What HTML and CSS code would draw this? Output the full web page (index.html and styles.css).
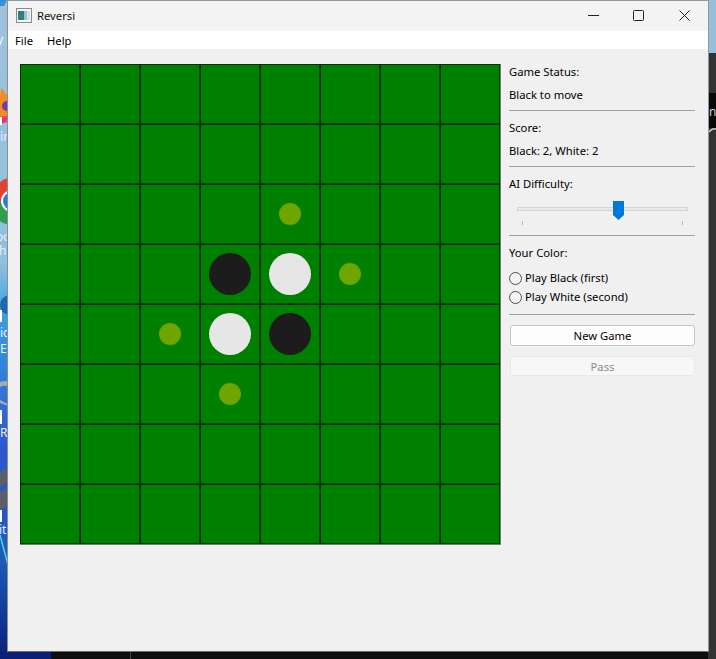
FILE: index.html
```html
<!DOCTYPE html>
<html lang="en">
<head>
<meta charset="utf-8">
<title>Reversi</title>
<link rel="stylesheet" href="styles.css">
</head>
<body>
<div class="desktop">
  <svg class="wallpaper" width="716" height="659" viewBox="0 0 716 659">
    <defs>
      <linearGradient id="wall" x1="0" y1="0" x2="0" y2="1">
        <stop offset="0" stop-color="#9fc2da"/>
        <stop offset="0.4" stop-color="#8fc0dc"/>
        <stop offset="0.48" stop-color="#35a0e0"/>
        <stop offset="0.68" stop-color="#2f55d0"/>
        <stop offset="0.85" stop-color="#1c5cb8"/>
        <stop offset="1" stop-color="#0a1f78"/>
      </linearGradient>
    </defs>
    <rect x="0" y="0" width="716" height="659" fill="#0e0e0e"/>
    <rect x="0" y="0" width="8" height="659" fill="url(#wall)"/>
    <rect x="0" y="651" width="51" height="8" fill="#0a1f78"/>
    <rect x="130" y="651" width="1" height="8" fill="#444"/>
    <rect x="708" y="0" width="8" height="53" fill="#97bfda"/>
    <rect x="708" y="53" width="8" height="606" fill="#333"/>
    <rect x="708" y="93" width="8" height="35" fill="#0a0a0a"/>
    <text x="709" y="116" class="desk-text" fill="#ccc">n</text>
    <path d="M709 132q3-4 7-3" fill="none" stroke="#ccc" stroke-width="1.5"/>
    <path d="M0 6h4l3-6H0z" fill="#3a8fd0"/>
    <text x="-3" y="44" class="desk-text" fill="#fff">y</text>
    <path d="M1 88q7 6 7 14v14q-2 6-8 7v-25z" fill="#f58a20"/>
    <circle cx="7" cy="106" r="5" fill="#6a3bb5"/>
    <path d="M0 116q5 2 8-1v6q-4 3-8 3z" fill="#e8366f"/>
    <rect x="0" y="117" width="2" height="8" fill="#fff"/>
    <text x="-6" y="141" class="desk-text" fill="#eef">Fir</text>
    <path d="M0 182a23 23 0 0 1 8-4v23H0z" fill="#e2412f"/>
    <path d="M0 201h8v23q-5 0-8-3z" fill="#2e9e4c"/>
    <circle cx="12" cy="201" r="11" fill="#fff"/>
    <circle cx="12" cy="201" r="9" fill="#2b78e4"/>
    <text x="-4" y="241" class="desk-text" fill="#eef">oo</text>
    <text x="-1" y="255" class="desk-text" fill="#eef">h</text>
    <circle cx="10" cy="305" r="10" fill="#1f66b0"/>
    <rect x="0" y="310" width="2" height="12" fill="#fff"/>
    <text x="0" y="337" class="desk-text" fill="#eef">ic</text>
    <text x="0" y="353" class="desk-text" fill="#eef">E</text>
    <path d="M0 382q8-2 8 0v4q-5-1-8 1zM0 400l8 4v2l-8-3z" fill="#a8a8b0"/>
    <rect x="0" y="410" width="2" height="14" fill="#fff"/>
    <text x="0" y="437" class="desk-text" fill="#eef">R</text>
    <path d="M0 472l8-4v14l-8 5zM0 492l8-4v18l-8 4z" fill="#5a5e66"/>
    <rect x="0" y="510" width="2" height="12" fill="#fff"/>
    <text x="-1" y="534" class="desk-text" fill="#eef">it</text>
    <path d="M0 535l8 30" stroke="#4fd0e8" stroke-width="1.5" fill="none"/>
  </svg>
</div>

<main class="window">
  <header class="titlebar">
    <svg class="app-icon" width="16" height="15" viewBox="0 0 16 15">
      <rect x="0.5" y="0.5" width="15" height="14" fill="#f4f4f4" stroke="#8a8a8a"/>
      <rect x="2" y="3" width="6" height="9" fill="#2f7f80"/>
      <rect x="8" y="3" width="3" height="9" fill="#9cc4c8"/>
      <rect x="11" y="3" width="3" height="9" fill="#d8e4e4"/>
    </svg>
    <span class="title">Reversi</span>
    <div class="controls">
      <span class="control control-min">
        <svg width="11" height="11" viewBox="0 0 11 11"><path d="M0 5.500h11" stroke="#222" stroke-width="1"/></svg>
      </span>
      <span class="control">
        <svg width="11" height="11" viewBox="0 0 11 11"><rect x="0.500" y="0.500" width="10" height="10" rx="1" fill="none" stroke="#222"/></svg>
      </span>
      <span class="control">
        <svg width="11" height="11" viewBox="0 0 11 11"><path d="M0.500 0.500l10 10M10.500 0.500l-10 10" stroke="#222" stroke-width="1"/></svg>
      </span>
    </div>
  </header>

  <nav class="menubar">
    <span class="menu-item">File</span>
    <span class="menu-item">Help</span>
  </nav>

  <div class="content">
    <section class="board">
      <div class="cell"></div><div class="cell"></div><div class="cell"></div><div class="cell"></div><div class="cell"></div><div class="cell"></div><div class="cell"></div><div class="cell"></div>
      <div class="cell"></div><div class="cell"></div><div class="cell"></div><div class="cell"></div><div class="cell"></div><div class="cell"></div><div class="cell"></div><div class="cell"></div>
      <div class="cell"></div><div class="cell"></div><div class="cell"></div><div class="cell"></div><div class="cell"><i class="hint"></i></div><div class="cell"></div><div class="cell"></div><div class="cell"></div>
      <div class="cell"></div><div class="cell"></div><div class="cell"></div><div class="cell"><i class="disc black"></i></div><div class="cell"><i class="disc white"></i></div><div class="cell"><i class="hint"></i></div><div class="cell"></div><div class="cell"></div>
      <div class="cell"></div><div class="cell"></div><div class="cell"><i class="hint"></i></div><div class="cell"><i class="disc white"></i></div><div class="cell"><i class="disc black"></i></div><div class="cell"></div><div class="cell"></div><div class="cell"></div>
      <div class="cell"></div><div class="cell"></div><div class="cell"></div><div class="cell"><i class="hint"></i></div><div class="cell"></div><div class="cell"></div><div class="cell"></div><div class="cell"></div>
      <div class="cell"></div><div class="cell"></div><div class="cell"></div><div class="cell"></div><div class="cell"></div><div class="cell"></div><div class="cell"></div><div class="cell"></div>
      <div class="cell"></div><div class="cell"></div><div class="cell"></div><div class="cell"></div><div class="cell"></div><div class="cell"></div><div class="cell"></div><div class="cell"></div>
    </section>

    <aside class="panel">
      <div class="label">Game Status:</div>
      <div class="label">Black to move</div>
      <hr class="sep">
      <div class="label">Score:</div>
      <div class="label">Black: 2, White: 2</div>
      <hr class="sep">
      <div class="label">AI Difficulty:</div>
      <div class="slider">
        <div class="track"></div>
        <svg class="thumb" width="11" height="19" viewBox="0 0 11 19"><path d="M0 0h11v14l-5.500 5L0 14z" fill="#0078d7"/></svg>
        <div class="ticks"><span class="tick"></span><span class="tick"></span></div>
      </div>
      <hr class="sep">
      <div class="label">Your Color:</div>
      <div class="radios">
        <label class="radio"><span class="dot"></span>Play Black (first)</label>
        <label class="radio"><span class="dot"></span>Play White (second)</label>
      </div>
      <hr class="sep sep-tight">
      <button class="btn" type="button">New Game</button>
      <button class="btn btn-disabled" type="button" disabled>Pass</button>
    </aside>
  </div>
</main>
</body>
</html>
```

FILE: styles.css
```css
* { box-sizing: border-box; }
html, body { margin: 0; padding: 0; }
body {
  width: 716px;
  height: 659px;
  overflow: hidden;
  background: #0e0e0e;
  font-family: "Noto Sans", "Open Sans", sans-serif;
  font-size: 11.25px;
  color: #000;
  position: relative;
}
.desktop { position: absolute; inset: 0; }
.wallpaper { display: block; }
.desk-text { font-family: "Noto Sans", sans-serif; font-size: 12px; }

.window {
  position: absolute;
  left: 7px;
  top: 0;
  width: 702px;
  height: 652px;
  display: flex;
  flex-direction: column;
  background: #f0f0f0;
  border: 1px solid #8d9aa5;
  border-bottom-color: #6d6d6d;
  border-left-color: #8a8f96;
}

.titlebar {
  height: 30px;
  flex: none;
  display: flex;
  align-items: center;
  background: #f3f3f3;
  padding: 0 0 1px 8px;
}
.app-icon { flex: none; margin-right: 5px; }
.title { color: #111; position: relative; top: -0.5px; }
.controls { margin-left: auto; display: flex; align-items: center; padding-right: 1px; }
.control {
  width: 46px;
  height: 29px;
  display: flex;
  align-items: center;
  justify-content: center;
}
.control-min { margin-right: -1px; }
.controls svg { display: block; }

.menubar {
  height: 18px;
  flex: none;
  background: #fff;
  display: flex;
  align-items: center;
  gap: 14px;
  padding: 2px 0 0 7px;
  line-height: 18px;
}

.content {
  flex: 1;
  display: flex;
  align-items: flex-start;
  padding: 15px 13px 0 12px;
  gap: 9px;
}

.board {
  width: 480px;
  height: 480px;
  flex: none;
  display: grid;
  grid-template-columns: repeat(8, 60px);
  grid-template-rows: repeat(8, 60px);
  background: #008000;
  box-shadow: 0 1px 0 #777, 1px 0 0 #777, 1px 1px 0 #777;
}
.cell {
  border-style: solid;
  border-width: 1px;
  border-color: #002e00 #004400 #004400 #002e00;
  display: flex;
  align-items: center;
  justify-content: center;
}
.disc { width: 42px; height: 42px; border-radius: 50%; display: block; }
.black { background: #1c1c1c; }
.white { background: #e6e6e6; }
.hint { width: 22px; height: 22px; border-radius: 50%; background: #6fa500; display: block; }

.panel {
  flex: 1;
  display: flex;
  flex-direction: column;
  gap: 7px;
  min-width: 0;
}
.label { height: 16px; line-height: 16px; white-space: nowrap; }
.sep {
  width: 100%;
  height: 1px;
  border: 0;
  margin: 0 0 2px;
  background: #a0a0a0;
}
.sep-tight { margin-top: 2px; }

.slider { position: relative; height: 29px; }
.track {
  position: absolute;
  left: 8px;
  right: 7px;
  top: 8px;
  height: 4px;
  background: #e7eae8;
  border: 1px solid #d6d6d6;
}
.thumb { position: absolute; left: 104px; top: 2px; display: block; }
.ticks {
  position: absolute;
  left: 13px;
  right: 12px;
  top: 22px;
  display: flex;
  justify-content: space-between;
}
.tick { width: 1px; height: 4px; background: #b8b8b8; display: block; }

.radios { display: flex; flex-direction: column; gap: 3px; margin-top: 2px; }
.radio { display: flex; align-items: center; height: 16px; line-height: 16px; white-space: nowrap; }
.dot {
  width: 13px;
  height: 13px;
  border: 1px solid #4d4d4d;
  border-radius: 50%;
  background: #f4f4f4;
  margin-right: 3px;
  flex: none;
}

.btn {
  display: block;
  width: 185px;
  height: 21px;
  margin: 1px 0 0 1px;
  padding: 0;
  font: inherit;
  color: #000;
  background: #fdfdfd;
  border: 1px solid #c4c4c4;
  border-radius: 3px;
}
.btn-disabled {
  height: 20px;
  margin-top: 3px;
  color: #8c8c8c;
  background: #f7f7f7;
  border-color: #e8e8e8;
}
```
